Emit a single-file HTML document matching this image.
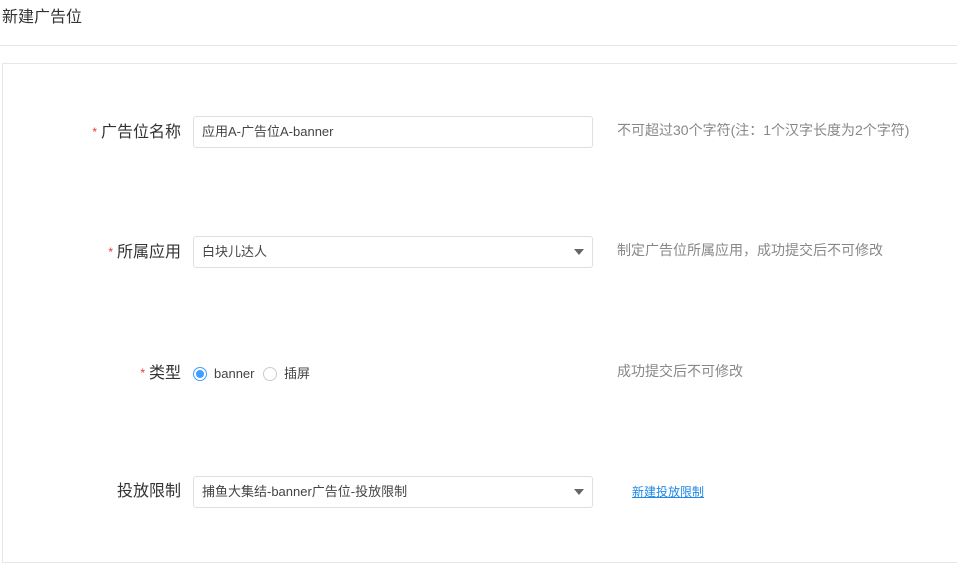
<!DOCTYPE html>
<html><head><meta charset="utf-8"><style>
*{margin:0;padding:0;box-sizing:border-box}
body{width:957px;height:548px;overflow:hidden;background:#fff;font-family:"Liberation Sans","Noto Sans CJK SC",sans-serif;color:#333;position:relative}
.h{position:absolute;left:2px;top:8px;font-size:16px;line-height:20px;color:#333}
.line{position:absolute;left:0;top:45px;width:957px;height:1px;background:#e6e6e6}
.card{position:absolute;left:2px;top:63px;width:970px;height:500px;border:1px solid #e6e6e6}
.lab{position:absolute;right:776px;font-size:16px;line-height:20px;color:#333;white-space:nowrap}
.lab i{font-style:normal;color:#e33;font-size:12px;margin-right:4px;vertical-align:1px}
.inp{position:absolute;left:193px;width:400px;height:32px;border:1px solid #dcdfe6;border-radius:3px;font-size:13px;line-height:30px;padding-left:8px;color:#444}
.arr{position:absolute;right:8px;top:12px;width:0;height:0;border-left:5px solid transparent;border-right:5px solid transparent;border-top:6px solid #666}
.hint{position:absolute;left:617px;font-size:14px;line-height:18px;color:#888;white-space:nowrap}
.radio{position:absolute;top:366px;font-size:13px;line-height:16px;color:#444}
.rc{position:absolute;width:14px;height:14px;border-radius:50%;top:367px}
</style></head><body>
<div class="h">新建广告位</div>
<div class="line"></div>
<div class="card"></div>
<div class="lab" style="top:122px"><i>*</i>广告位名称</div>
<div class="inp" style="top:116px">应用A-广告位A-banner</div>
<div class="hint" style="top:121px">不可超过30个字符(注：1个汉字长度为2个字符)</div>
<div class="lab" style="top:242px"><i>*</i>所属应用</div>
<div class="inp" style="top:236px">白块儿达人<span class="arr"></span></div>
<div class="hint" style="top:241px">制定广告位所属应用，成功提交后不可修改</div>
<div class="lab" style="top:363px"><i>*</i>类型</div>
<div class="rc" style="left:193px;border:1px solid #409eff"><div style="position:absolute;left:2px;top:2px;width:8px;height:8px;border-radius:50%;background:#409eff"></div></div>
<div class="radio" style="left:214px">banner</div>
<div class="rc" style="left:263px;border:1px solid #ccc"></div>
<div class="radio" style="left:284px">插屏</div>
<div class="hint" style="top:362px">成功提交后不可修改</div>
<div class="lab" style="top:482px">投放限制</div>
<div class="inp" style="top:476px">捕鱼大集结-banner广告位-投放限制<span class="arr"></span></div>
<div style="position:absolute;left:632px;top:483px;font-size:12px;line-height:18px;color:#1e88e5;text-decoration:underline">新建投放限制</div>
</body></html>
